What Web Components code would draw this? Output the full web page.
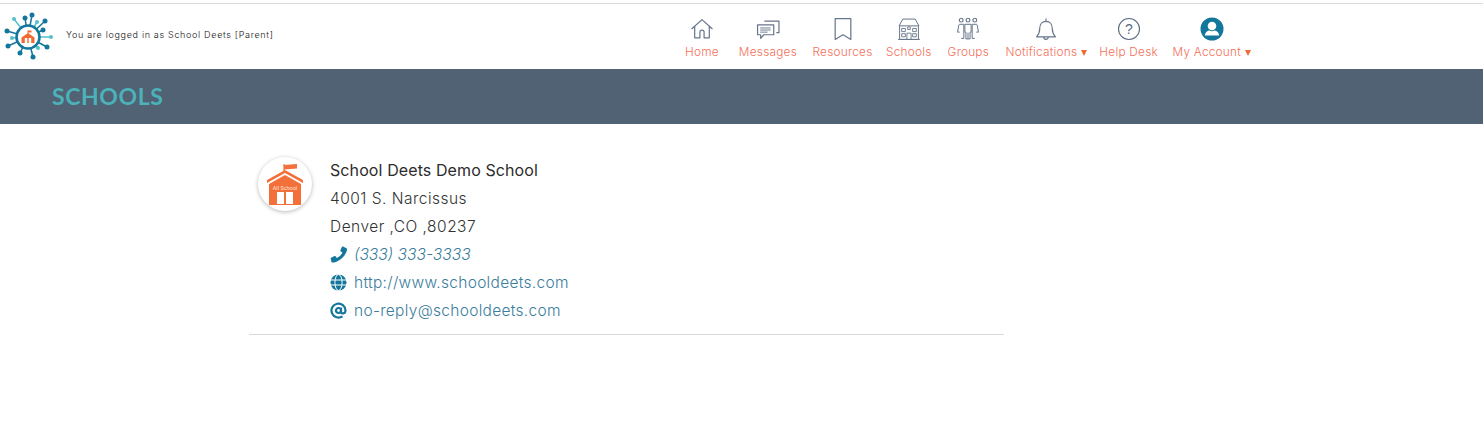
<!DOCTYPE html>
<html>
<head>
<meta charset="utf-8">
<title>Schools</title>
<style>
  html, body { margin: 0; padding: 0; background: #fff; }
  body { font-family: "Inter", "Liberation Sans", sans-serif; }
</style>
</head>
<body>
<school-header>
  <nav-item label="Home" icon="home"></nav-item>
  <nav-item label="Messages" icon="messages"></nav-item>
  <nav-item label="Resources" icon="resources"></nav-item>
  <nav-item label="Schools" icon="schools"></nav-item>
  <nav-item label="Groups" icon="groups"></nav-item>
  <nav-item label="Notifications" icon="bell" caret></nav-item>
  <nav-item label="Help Desk" icon="help"></nav-item>
  <nav-item label="My Account" icon="account" caret></nav-item>
</school-header>
<page-banner>SCHOOLS</page-banner>
<school-card>
  <span slot="name">School Deets Demo School</span>
  <span slot="street">4001 S. Narcissus</span>
  <span slot="city">Denver ,CO ,80237</span>
  <span slot="phone">(333) 333-3333</span>
  <span slot="web">http://www.schooldeets.com</span>
  <span slot="mail">no-reply@schooldeets.com</span>
</school-card>

<script>
// Iconos de la navegación
const NAV_ICONS = {
  home: `<path d="M1.500 11.500 11.500 2.500l10 9M4.500 9v11h5v-5.500a2 2 0 0 1 4 0V20h5V9"/>`,
  messages: `<path d="M8 4h14v11h-2.500M1.500 7.500h15.500V17H7.500L4.500 20.500V17h-3z"/><path d="M4 10.500h10M4 12.500h10M4 14.500h7" stroke-width=".9"/>`,
  resources: `<path d="M4 1.500h15v20l-7.500-4.500L4 21.500z"/>`,
  schools: `<path d="M2 8.500 5.500 2h12L21 8.500zM2.500 8.500V21.500h18V8.500" stroke-width=".95"/><path d="M4.500 11h3.500v3H4.500zM15 11h3.500v3H15zM4.500 16h3.500v3H4.500zM15 16h3.500v3H15zM9.500 21.500V15.500h4v6M10.300 9.500h2.400V12h-2.400z" stroke-width=".85"/><path d="M1 21.500h21" stroke-width=".85"/>`,
  groups: `<circle cx="5" cy="3" r="1.800"/><circle cx="11.500" cy="3" r="1.800"/><circle cx="18" cy="3" r="1.800"/><path d="M3 7h4.500V20.500H5M20 7h-4.500v13.500H18M8.500 7h6v7.500h-1V21h-4v-6.500h-1zM2.700 7.500 1.500 14.500h2M20.300 7.500l1.200 7h-2M11.500 15v6" stroke-width=".95"/>`,
  bell: `<path d="M2.500 19c2-2.200 3-4 3-8 0-4 2.300-6.800 6-6.800s6 2.800 6 6.800c0 4 1 5.800 3 8zM9.300 19.200a2.200 2.200 0 0 0 4.400 0M11.500 4.200V1.500"/>`,
};

function navIcon(name) {
  if (name === "help") {
    return `<svg width="24" height="24" viewBox="0 0 24 24"><circle cx="12" cy="12" r="10.500" fill="none" stroke="#5b6b80" stroke-width="1.100"/><text x="12" y="17" text-anchor="middle" font-family="Liberation Sans" font-size="14" fill="#5b6b80">?</text></svg>`;
  }
  if (name === "account") {
    return `<svg width="24" height="24" viewBox="0 0 24 24"><circle cx="12" cy="12" r="11.500" fill="#13769b"/><circle cx="12" cy="9" r="4.300" fill="#fff"/><path d="M4.800 18.500c.4-3.500 3-4.800 4.700-5 1.500 1 3.500 1 5 0 1.700.2 4.300 1.500 4.700 5z" fill="#fff"/></svg>`;
  }
  return `<svg width="24" height="24" viewBox="0 0 23 23" fill="none" stroke="#66758a" stroke-width="1.150" stroke-linejoin="round">${NAV_ICONS[name]}</svg>`;
}

class NavItem extends HTMLElement {
  connectedCallback() {
    const label = this.getAttribute("label");
    const caret = this.hasAttribute("caret") ? `<i></i>` : "";
    this.attachShadow({ mode: "open" }).innerHTML = `
      <style>
        :host { display: flex; flex-direction: column; align-items: center; white-space: nowrap; }
        svg { display: block; margin-bottom: 3px; }
        span { display: flex; align-items: center; height: 16px; font: 300 11.800px "Inter", sans-serif; letter-spacing: .25px; color: #f4705a; }
        i { display: inline-block; margin: 2px 0 0 4px; border-left: 3.500px solid transparent; border-right: 3.500px solid transparent; border-top: 6px solid #f26a33; }
      </style>
      ${navIcon(this.getAttribute("icon"))}
      <span>${label}${caret}</span>`;
  }
}
customElements.define("nav-item", NavItem);

// Nodos del logo leídos de la captura: x, y, teal?
const LOGO_NODES = [
  [10, 7, 1], [21, 6, 0], [28, 3, 0], [33, 10, 1], [41, 9, 0], [39, 18, 0], [47, 25, 1],
  [43, 35, 0], [34, 36, 1], [29, 45, 0], [16, 41, 0], [4, 34, 0], [8, 26, 1], [3, 19, 0],
];

class SchoolHeader extends HTMLElement {
  constructor() {
    super();
    const spokes = LOGO_NODES.map(([x, y, teal]) => {
      const c = teal ? "#55c0cb" : "#13769b";
      return `<line x1="24" y1="25" x2="${x}" y2="${y}" stroke="${c}" stroke-width="1.500"/><circle cx="${x}" cy="${y}" r="${teal ? 2 : 2.500}" fill="${c}"/>`;
    }).join("");
    this.attachShadow({ mode: "open" }).innerHTML = `
      <style>
        :host { display: flex; align-items: stretch; height: 65px; margin-top: 3px; border-top: 1px solid #dcdcdc; box-sizing: content-box; background: #fff; }
        .brand { display: flex; align-items: center; width: 685px; padding-left: 4px; box-sizing: border-box; flex: none; }
        .brand svg { display: block; }
        .who { margin-left: 13px; font: 300 9px "Inter", sans-serif; letter-spacing: .68px; color: #111; white-space: nowrap; margin-top: -5px; }
        nav { display: flex; padding-top: 13px; }
        ::slotted(nav-item:nth-child(1)) { margin-right: 20px; }
        ::slotted(nav-item:nth-child(2)) { margin-right: 15.500px; }
        ::slotted(nav-item:nth-child(3)) { margin-right: 13.500px; }
        ::slotted(nav-item:nth-child(4)) { margin-right: 16px; }
        ::slotted(nav-item:nth-child(5)) { margin-right: 16.500px; }
        ::slotted(nav-item:nth-child(6)) { margin-right: 12px; }
        ::slotted(nav-item:nth-child(7)) { margin-right: 14.500px; }
      </style>
      <div class="brand">
        <svg width="49" height="49" viewBox="0 0 49 49">
          ${spokes}
          <circle cx="24" cy="25" r="11.500" fill="#fff" stroke="#13769b" stroke-width="2.500"/>
          <path d="M24 18.500v3" stroke="#f26a33" stroke-width="1"/>
          <path d="M24 18.500h3.500v2H24z" fill="#f26a33"/>
          <path d="M17.500 25.500 24 21l6.500 4.500V31h-13z" fill="#f26a33"/>
          <path d="M20.800 26h2.500v5h-2.500zM24.700 26h2.500v5h-2.500z" fill="#fff"/>
        </svg>
        <span class="who">You are logged in as School Deets [Parent]</span>
      </div>
      <nav><slot></slot></nav>`;
  }
}
customElements.define("school-header", SchoolHeader);

class PageBanner extends HTMLElement {
  constructor() {
    super();
    this.attachShadow({ mode: "open" }).innerHTML = `
      <style>
        :host { display: flex; align-items: center; height: 53px; padding: 0 0 2px 52px; background: #506274; color: #4cb1b8; font: 700 23px "Lato", sans-serif; letter-spacing: .6px; }
      </style>
      <slot></slot>`;
  }
}
customElements.define("page-banner", PageBanner);

class SchoolCard extends HTMLElement {
  constructor() {
    super();
    this.attachShadow({ mode: "open" }).innerHTML = `
      <style>
        :host { display: flex; width: 755px; margin: 32px 0 0 249px; padding-bottom: 10px; border-bottom: 1px solid #d9d9d9; box-sizing: content-box; }
        .badge { flex: none; width: 54px; height: 54px; margin: 1px 18px 0 9px; border-radius: 50%; background: #fff; box-shadow: 0 1px 4px rgba(0,0,0,.28); display: flex; align-items: center; justify-content: center; }
        .badge svg { display: block; }
        .rows { display: flex; flex-direction: column; font: 300 15.500px "Inter", sans-serif; letter-spacing: .48px; color: #333; }
        .row { display: flex; align-items: center; height: 28px; white-space: nowrap; }
        .name { font-size: 16px; font-weight: 400; letter-spacing: .1px; color: #2c2c2c; }
        .link { color: #3a7d9c; letter-spacing: .3px; }
        .link svg { flex: none; width: 17px; height: 17px; margin-right: 7px; fill: #13769b; }
        .phone { font-style: italic; letter-spacing: 0; }
      </style>
      <div class="badge">
        <svg width="36" height="41" viewBox="0 0 36 41">
          <path d="M17 0v7" stroke="#f4703a" stroke-width="1.200"/>
          <path d="M17 1 30 0v4.500L17 5.500z" fill="#f4703a"/>
          <path d="M18 6 36 16v3L18 9 0 19v-3z" fill="#f4703a"/>
          <path d="M18 11 34 20v21H2V20z" fill="#f4703a"/>
          <path d="M10 28h7v12h-7zM19 28h7v12h-7z" fill="#fff"/>
          <text x="18" y="25.500" text-anchor="middle" font-family="Roboto" font-size="5.500" fill="#fde4d8">All School</text>
        </svg>
      </div>
      <div class="rows">
        <div class="row name"><slot name="name"></slot></div>
        <div class="row"><slot name="street"></slot></div>
        <div class="row"><slot name="city"></slot></div>
        <div class="row link phone">
          <svg viewBox="0 0 17 17"><path d="M16.500 2.200 13 .5c-.4-.2-.8 0-1 .3l-1.600 3.500c-.2.300-.1.700.2.900l1.800 1.400a11 11 0 0 1-5.500 5.500L5.500 10.300c-.2-.3-.6-.4-.9-.2l-3.500 1.600c-.4.200-.5.600-.4 1l.8 3.300c.1.400.4.600.8.600C9 16.600 17 8.600 17 3c0-.4-.2-.7-.5-.8z"/></svg>
          <slot name="phone"></slot>
        </div>
        <div class="row link">
          <svg viewBox="0 0 17 17">
            <circle cx="8.500" cy="8.500" r="8"/>
            <g fill="none" stroke="#fff" stroke-width="1"><ellipse cx="8.500" cy="8.500" rx="3.600" ry="8"/><path d="M.5 6h16M.5 11h16"/></g>
          </svg>
          <slot name="web"></slot>
        </div>
        <div class="row link">
          <svg viewBox="0 0 17 17"><path fill="none" stroke="#13769b" stroke-width="2.200" d="M11 8.500a2.500 2.500 0 1 1-5 0 2.500 2.500 0 0 1 5 0zm0-3v4.300c0 2.400 4.500 2.400 4.500-1.300a7 7 0 1 0-3 5.800"/></svg>
          <slot name="mail"></slot>
        </div>
      </div>`;
  }
}
customElements.define("school-card", SchoolCard);
</script>
</body>
</html>
